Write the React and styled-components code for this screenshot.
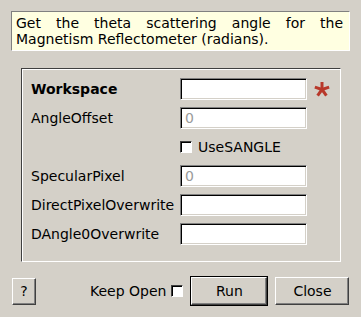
import React from 'react'
import styled, { createGlobalStyle } from 'styled-components'

const Global = createGlobalStyle`
  html, body {
    margin: 0;
    padding: 0;
    background: #d4d0c8;
  }
  body {
    font-family: "DejaVu Sans", "Liberation Sans", sans-serif;
    font-size: 14px;
    color: #000;
  }
`

const Dialog = styled.div`
  width: 361px;
  height: 317px;
  box-sizing: border-box;
  background: #d4d0c8;
  padding: 11px 11px 0 11px;
  display: flex;
  flex-direction: column;
`

const Description = styled.div`
  width: 339px;
  height: 40px;
  box-sizing: border-box;
  background: #ffffe1;
  border-top: 1px solid #808080;
  border-left: 1px solid #808080;
  border-right: 1px solid #ffffff;
  border-bottom: 1px solid #ffffff;
  padding: 3px 6px 0 4px;
  line-height: 16px;
  text-align: justify;
  text-align-last: left;
`

const GroupBox = styled.div`
  margin: 17px 0 0 10px;
  width: 320px;
  height: 194px;
  box-sizing: border-box;
  border-top: 1px solid #404040;
  border-left: 1px solid #404040;
  border-right: 1px solid #ffffff;
  border-bottom: 1px solid #ffffff;
  box-shadow: inset 1px 1px 0 #ffffff;
  padding: 9px 0 0 9px;
  display: grid;
  grid-template-columns: 149px 127px 30px;
  grid-auto-rows: 22px;
  row-gap: 7px;
  align-items: center;
`

const Label = styled.div`
  font-weight: ${p => (p.$bold ? 'bold' : 'normal')};
  white-space: nowrap;
`

const Field = styled.div`
  height: 22px;
  box-sizing: border-box;
  background: #ffffff;
  border-top: 1px solid #808080;
  border-left: 1px solid #808080;
  border-right: 1px solid #ffffff;
  border-bottom: 1px solid #ffffff;
  box-shadow: inset 1px 1px 0 #000000, inset -1px -1px 0 #d4d0c8;
  padding: 0 4px;
  display: flex;
  align-items: center;
  color: #9a9a9a;
`

const Star = styled.div`
  padding-left: 7px;
  display: flex;
  align-items: center;
`

const CheckRow = styled.label`
  grid-column: 2 / 4;
  display: flex;
  align-items: center;
  gap: 6px;
`

const Box = styled.span`
  flex-shrink: 0;
  width: 12px;
  height: 12px;
  box-sizing: border-box;
  background: #ffffff;
  border-top: 1px solid #404040;
  border-left: 1px solid #404040;
  border-right: 1px solid #ffffff;
  border-bottom: 1px solid #ffffff;
  box-shadow: inset 1px 1px 0 #000;
  display: inline-block;
`

const Footer = styled.div`
  margin-top: 15px;
  display: flex;
  align-items: center;
  margin-left: 1px;
`

const Button = styled.div`
  flex-shrink: 0;
  box-sizing: border-box;
  width: ${p => p.$w}px;
  height: ${p => p.$h}px;
  display: flex;
  align-items: center;
  justify-content: center;
  background: #d4d0c8;
  border-top: 1px solid #ffffff;
  border-left: 1px solid #ffffff;
  border-right: 1px solid #404040;
  border-bottom: 1px solid #404040;
  box-shadow: inset -1px -1px 0 #808080;
  outline: ${p => (p.$default ? '1px solid #000' : 'none')};
  margin-left: ${p => p.$ml || 0}px;
`

const KeepOpen = styled.div`
  margin-left: 54px;
  display: flex;
  align-items: center;
  gap: 5px;
  white-space: nowrap;
  flex-shrink: 0;
`

function Asterisk() {
  const arms = [0, 72, 144, 216, 288]
  return (
    <svg width="16" height="16" viewBox="0 0 16 16">
      {arms.map(a => (
        <line
          key={a}
          x1="8"
          y1="8.5"
          x2="8"
          y2="1"
          stroke="#b8382a"
          strokeWidth="3"
          transform={`rotate(${a} 8 8.5)`}
        />
      ))}
    </svg>
  )
}

export default function App() {
  return (
    <>
      <Global />
      <Dialog>
        <Description>
          Get the theta scattering angle for the Magnetism Reflectometer (radians).
        </Description>
        <GroupBox>
          <Label $bold>Workspace</Label>
          <Field />
          <Star><Asterisk /></Star>

          <Label>AngleOffset</Label>
          <Field>0</Field>
          <div />

          <div />
          <CheckRow><Box />UseSANGLE</CheckRow>

          <Label>SpecularPixel</Label>
          <Field>0</Field>
          <div />

          <Label>DirectPixelOverwrite</Label>
          <Field />
          <div />

          <Label>DAngle0Overwrite</Label>
          <Field />
          <div />
        </GroupBox>
        <Footer>
          <Button $w={24} $h={27}>?</Button>
          <KeepOpen>Keep Open <Box /></KeepOpen>
          <Button $w={76} $h={28} $default $ml={8}>Run</Button>
          <Button $w={74} $h={28} $ml={8}>Close</Button>
        </Footer>
      </Dialog>
    </>
  )
}
